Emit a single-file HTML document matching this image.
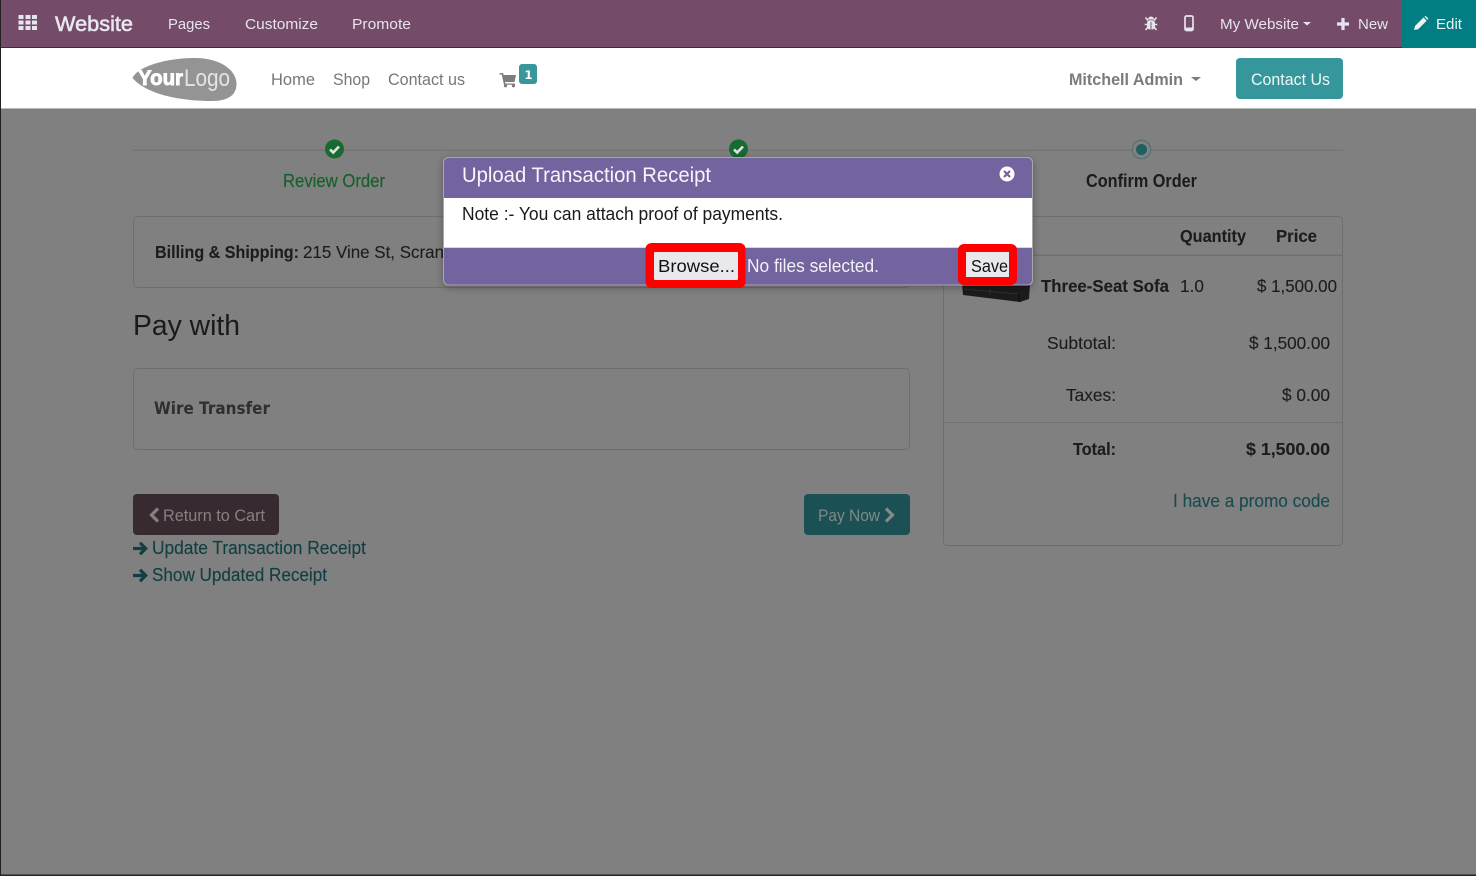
<!DOCTYPE html>
<html lang="en"><head><meta charset="utf-8"><title>Upload Transaction Receipt</title>
<style>
html,body{margin:0;padding:0;width:1476px;height:876px;overflow:hidden;background:#808080}
svg{display:block}
text{font-family:"Liberation Sans",sans-serif;white-space:pre}
.b{font-weight:700}
.tb{fill:#e6e4ee;font-size:15px}
.nav{fill:#74777b;font-size:17px}
.d{fill:#1c1c1c;stroke:#1c1c1c;stroke-width:.12;font-size:17.5px}
.lk{fill:#113f43;stroke:#113f43;stroke-width:.15;font-size:18px}
</style></head><body>
<svg width="1476" height="876" viewBox="0 0 1476 876" xmlns="http://www.w3.org/2000/svg">
<defs><filter id="sh" x="-5%" y="-15%" width="110%" height="130%"><feDropShadow dx="0" dy="2" stdDeviation="4" flood-color="#000" flood-opacity=".3"/></filter></defs>
<rect width="1476" height="876" fill="#808080"/>

<!-- toolbar -->
<rect width="1476" height="47" fill="#744c69"/>
<rect y="47" width="1476" height="1" fill="#3c2a38"/>
<rect x="1402" width="74" height="48" fill="#017e84"/>
<g fill="#e6e4ee">
<rect x="18.500" y="15" width="5" height="4" /><rect x="25.500" y="15" width="5" height="4"/><rect x="32" y="15" width="5" height="4"/>
<rect x="18.500" y="20.500" width="5" height="4"/><rect x="25.500" y="20.500" width="5" height="4"/><rect x="32" y="20.500" width="5" height="4"/>
<rect x="18.500" y="26" width="5" height="4"/><rect x="25.500" y="26" width="5" height="4"/><rect x="32" y="26" width="5" height="4"/>
</g>
<text x="55" y="31" font-size="21" fill="#e9e7f0" stroke="#e9e7f0" stroke-width=".55" textLength="78" lengthAdjust="spacingAndGlyphs">Website</text>
<text class="tb" x="168" y="29" textLength="42" lengthAdjust="spacingAndGlyphs">Pages</text>
<text class="tb" x="245" y="29" textLength="73" lengthAdjust="spacingAndGlyphs">Customize</text>
<text class="tb" x="352" y="29" textLength="59" lengthAdjust="spacingAndGlyphs">Promote</text>
<!-- bug -->
<g fill="#e6e4ee" stroke="#e6e4ee">
<path d="M1148 19.500a3 3 0 0 1 6 0z" stroke="none"/>
<rect x="1147" y="20.300" width="8" height="9.200" rx="2.800" stroke="none"/>
<path d="M1145.500 17.500l2.500 3M1156.500 17.500l-2.500 3M1144.800 24.500h3M1157.200 24.500h-3M1145.500 30l2.500-3M1156.500 30l-2.500-3" fill="none" stroke-width="1.600"/>
</g>
<path d="M1151 22v7.500" stroke="#744c69" stroke-width=".9"/>
<!-- mobile -->
<rect x="1185" y="16" width="8" height="14.500" rx="1.500" fill="none" stroke="#e6e4ee" stroke-width="1.700"/>
<rect x="1185.500" y="27.500" width="7" height="2.500" fill="#e6e4ee"/>
<text class="tb" x="1220" y="29" textLength="79" lengthAdjust="spacingAndGlyphs">My Website</text>
<path d="M1303 22h8l-4 3.500z" fill="#e6e4ee"/>
<path d="M1343 18v12M1337 24h12" stroke="#e6e4ee" stroke-width="3.200"/>
<text class="tb" x="1358" y="29" textLength="30" lengthAdjust="spacingAndGlyphs">New</text>
<path d="M1414 30l1-4 8.500-8.500 3.200 3.200-8.500 8.500zM1424.500 16.700l1-1 3 3-1 1.100z" fill="#eef3f3"/>
<text class="tb" x="1436" y="29" textLength="26" lengthAdjust="spacingAndGlyphs" style="fill:#eef3f3">Edit</text>

<!-- header -->
<rect y="48" width="1476" height="61" fill="#fff"/>
<rect y="108.500" width="1476" height="1" fill="#777"/>
<path d="M132.500 78C137 67 165 58 195 58C220 58 236.500 70 236.500 84C236.500 95 228 101 212 101C185 101 148 96 132.500 78Z" fill="#949494"/>
<text x="138" y="85" font-size="21" class="b" fill="#fff" stroke="#fff" stroke-width=".9" textLength="45" lengthAdjust="spacingAndGlyphs">Your</text>
<text x="184" y="86" font-size="24" fill="#e4e4e4" textLength="46" lengthAdjust="spacingAndGlyphs">Logo</text>
<text class="nav" x="271" y="85" textLength="44" lengthAdjust="spacingAndGlyphs">Home</text>
<text class="nav" x="333" y="85" textLength="37" lengthAdjust="spacingAndGlyphs">Shop</text>
<text class="nav" x="388" y="85" textLength="77" lengthAdjust="spacingAndGlyphs">Contact us</text>
<path d="M500 73h3l.7 2h12.300l-1.500 7h-9.500l.4 1.500h9.600v1.300h-11l-2.300-10.300h-2.700z" fill="#7d7d7d"/>
<circle cx="505.500" cy="85.800" r="1.600" fill="#7d7d7d"/><circle cx="513.500" cy="85.800" r="1.600" fill="#7d7d7d"/>
<rect x="519" y="64" width="18" height="20" rx="3" fill="#37979c"/>
<text x="524.500" y="79" font-size="11.500" class="b" fill="#fff" style="font-family:'DejaVu Sans',sans-serif">1</text>
<text x="1069" y="85" font-size="17" class="b" fill="#7b7b7b" textLength="114" lengthAdjust="spacingAndGlyphs">Mitchell Admin</text>
<path d="M1191 77h10l-5 4z" fill="#7b7b7b"/>
<rect x="1236" y="58" width="107" height="41" rx="4" fill="#35969b"/>
<text x="1251" y="85" font-size="17" fill="#f0f8f8" textLength="79" lengthAdjust="spacingAndGlyphs">Contact Us</text>

<!-- steps -->
<rect x="133" y="149.500" width="1210" height="1.500" fill="#747474"/>
<circle cx="334.500" cy="149" r="9.500" fill="#166b30"/>
<path d="M330 149.500l3.200 3 5.800-6" fill="none" stroke="#e0e0e0" stroke-width="2.600"/>
<circle cx="738.500" cy="149" r="9.500" fill="#166b30"/>
<path d="M734 149.500l3.200 3 5.800-6" fill="none" stroke="#e0e0e0" stroke-width="2.600"/>
<circle cx="1141.500" cy="149.500" r="9.300" fill="#808080" stroke="#3d6d70" stroke-width=".8"/>
<circle cx="1141.500" cy="149.500" r="5.500" fill="#1c6064"/>
<text x="283" y="187" font-size="18" fill="#14602a" stroke="#14602a" stroke-width=".15" textLength="102" lengthAdjust="spacingAndGlyphs">Review Order</text>
<text x="1086" y="187" font-size="18" class="b" fill="#1b1b1b" textLength="111" lengthAdjust="spacingAndGlyphs">Confirm Order</text>

<!-- left column -->
<rect x="133.500" y="216.500" width="776" height="71" rx="4" fill="none" stroke="#6e6e6e"/>
<text class="d b" x="155" y="258" textLength="144" lengthAdjust="spacingAndGlyphs">Billing &amp; Shipping:</text>
<text class="d" x="303" y="258" textLength="141" lengthAdjust="spacingAndGlyphs">215 Vine St, Scran</text>
<text x="133" y="335" font-size="29" fill="#1a1a1a" textLength="107" lengthAdjust="spacingAndGlyphs">Pay with</text>
<rect x="133.500" y="368.500" width="776" height="81" rx="4" fill="none" stroke="#6e6e6e"/>
<text x="154" y="414" font-size="17" class="b" fill="#2f2f2f" style="font-family:'DejaVu Sans',sans-serif" textLength="116" lengthAdjust="spacingAndGlyphs">Wire Transfer</text>
<rect x="133" y="494" width="146" height="41" rx="4" fill="#372a31"/>
<path d="M158 508.500l-6.500 6.500 6.500 6.500" fill="none" stroke="#87807f" stroke-width="3.200"/>
<text x="163" y="521" font-size="17" fill="#87807f" textLength="102" lengthAdjust="spacingAndGlyphs">Return to Cart</text>
<rect x="804" y="494" width="106" height="41" rx="4" fill="#1b5054"/>
<text x="818" y="521" font-size="17" fill="#7f8a88" textLength="62" lengthAdjust="spacingAndGlyphs">Pay Now</text>
<path d="M886 508.500l6.500 6.500-6.500 6.500" fill="none" stroke="#868a88" stroke-width="3.200"/>
<path d="M133 548.500h12M140 542.800l5.700 5.700-5.700 5.700" fill="none" stroke="#113f43" stroke-width="3.200"/>
<text class="lk" x="152" y="554" textLength="214" lengthAdjust="spacingAndGlyphs">Update Transaction Receipt</text>
<path d="M133 575.500h12M140 569.800l5.700 5.700-5.700 5.700" fill="none" stroke="#113f43" stroke-width="3.200"/>
<text class="lk" x="152" y="581" textLength="175" lengthAdjust="spacingAndGlyphs">Show Updated Receipt</text>

<!-- right card -->
<rect x="943.500" y="216.500" width="399" height="329" rx="4" fill="none" stroke="#6e6e6e"/>
<rect x="944" y="254.500" width="398" height="1.500" fill="#707070"/>
<rect x="944" y="422" width="398" height="1" fill="#707070"/>
<text class="d b" x="1180" y="242" textLength="66" lengthAdjust="spacingAndGlyphs">Quantity</text>
<text class="d b" x="1276" y="242" textLength="41" lengthAdjust="spacingAndGlyphs">Price</text>
<path d="M962 283L1030 283L1029 299L1020 302L963 295Z" fill="#1b1b1b"/>
<path d="M964 289L1018 294M990 289L990 295" stroke="#2f2f2f" stroke-width="1" fill="none"/>
<path d="M1018 294L1020 302" stroke="#0d0d0d" stroke-width="1" fill="none"/>
<text class="d b" x="1041" y="292" textLength="128" lengthAdjust="spacingAndGlyphs">Three-Seat Sofa</text>
<text class="d" x="1180" y="292" textLength="24" lengthAdjust="spacingAndGlyphs">1.0</text>
<text class="d" x="1257" y="292" textLength="80" lengthAdjust="spacingAndGlyphs">$ 1,500.00</text>
<text class="d" x="1047" y="349" textLength="69" lengthAdjust="spacingAndGlyphs">Subtotal:</text>
<text class="d" x="1249" y="349" textLength="81" lengthAdjust="spacingAndGlyphs">$ 1,500.00</text>
<text class="d" x="1066" y="401" textLength="50" lengthAdjust="spacingAndGlyphs">Taxes:</text>
<text class="d" x="1282" y="401" textLength="48" lengthAdjust="spacingAndGlyphs">$ 0.00</text>
<text class="d b" x="1073" y="455" textLength="43" lengthAdjust="spacingAndGlyphs">Total:</text>
<text class="d b" x="1246" y="455" textLength="84" lengthAdjust="spacingAndGlyphs">$ 1,500.00</text>
<text x="1173" y="507" font-size="18" fill="#184a4e" stroke="#184a4e" stroke-width=".12" textLength="157" lengthAdjust="spacingAndGlyphs">I have a promo code</text>

<!-- modal -->
<rect x="443.500" y="157.500" width="589" height="127.500" rx="5" fill="#73639e" stroke="#a8a8a8" stroke-width="1" filter="url(#sh)"/>
<rect x="444" y="198" width="588" height="49" fill="#fff"/>
<rect x="444" y="247" width="588" height="1" fill="#d8d4e4"/>
<text x="462" y="182" font-size="21.500" fill="#f6f5fa" textLength="249" lengthAdjust="spacingAndGlyphs">Upload Transaction Receipt</text>
<circle cx="1007" cy="174" r="7.500" fill="#fff"/>
<path d="M1004 171l6 6M1010 171l-6 6" stroke="#73639e" stroke-width="2.200"/>
<text x="462" y="220" font-size="18" fill="#1a1a1a" textLength="321" lengthAdjust="spacingAndGlyphs">Note :- You can attach proof of payments.</text>
<rect x="645.500" y="243" width="100" height="45" rx="6" fill="#f00"/>
<rect x="654" y="252" width="84" height="28" rx="1" fill="#e9e9ed"/>
<text x="658" y="272" font-size="17.500" fill="#111" textLength="77" lengthAdjust="spacingAndGlyphs">Browse...</text>
<text x="747" y="272" font-size="18" fill="#f2f1f7" textLength="132" lengthAdjust="spacingAndGlyphs">No files selected.</text>
<rect x="958" y="244" width="59" height="41" rx="6" fill="#f00"/>
<rect x="966" y="252" width="43" height="25" fill="#e9e9ed"/>
<text x="971" y="272" font-size="17.500" fill="#111" textLength="37" lengthAdjust="spacingAndGlyphs">Save</text>

<!-- screenshot edges -->
<rect width="1" height="876" fill="#222"/>
<rect y="874.500" width="1476" height="1.500" fill="#222"/>
</svg>
</body></html>
